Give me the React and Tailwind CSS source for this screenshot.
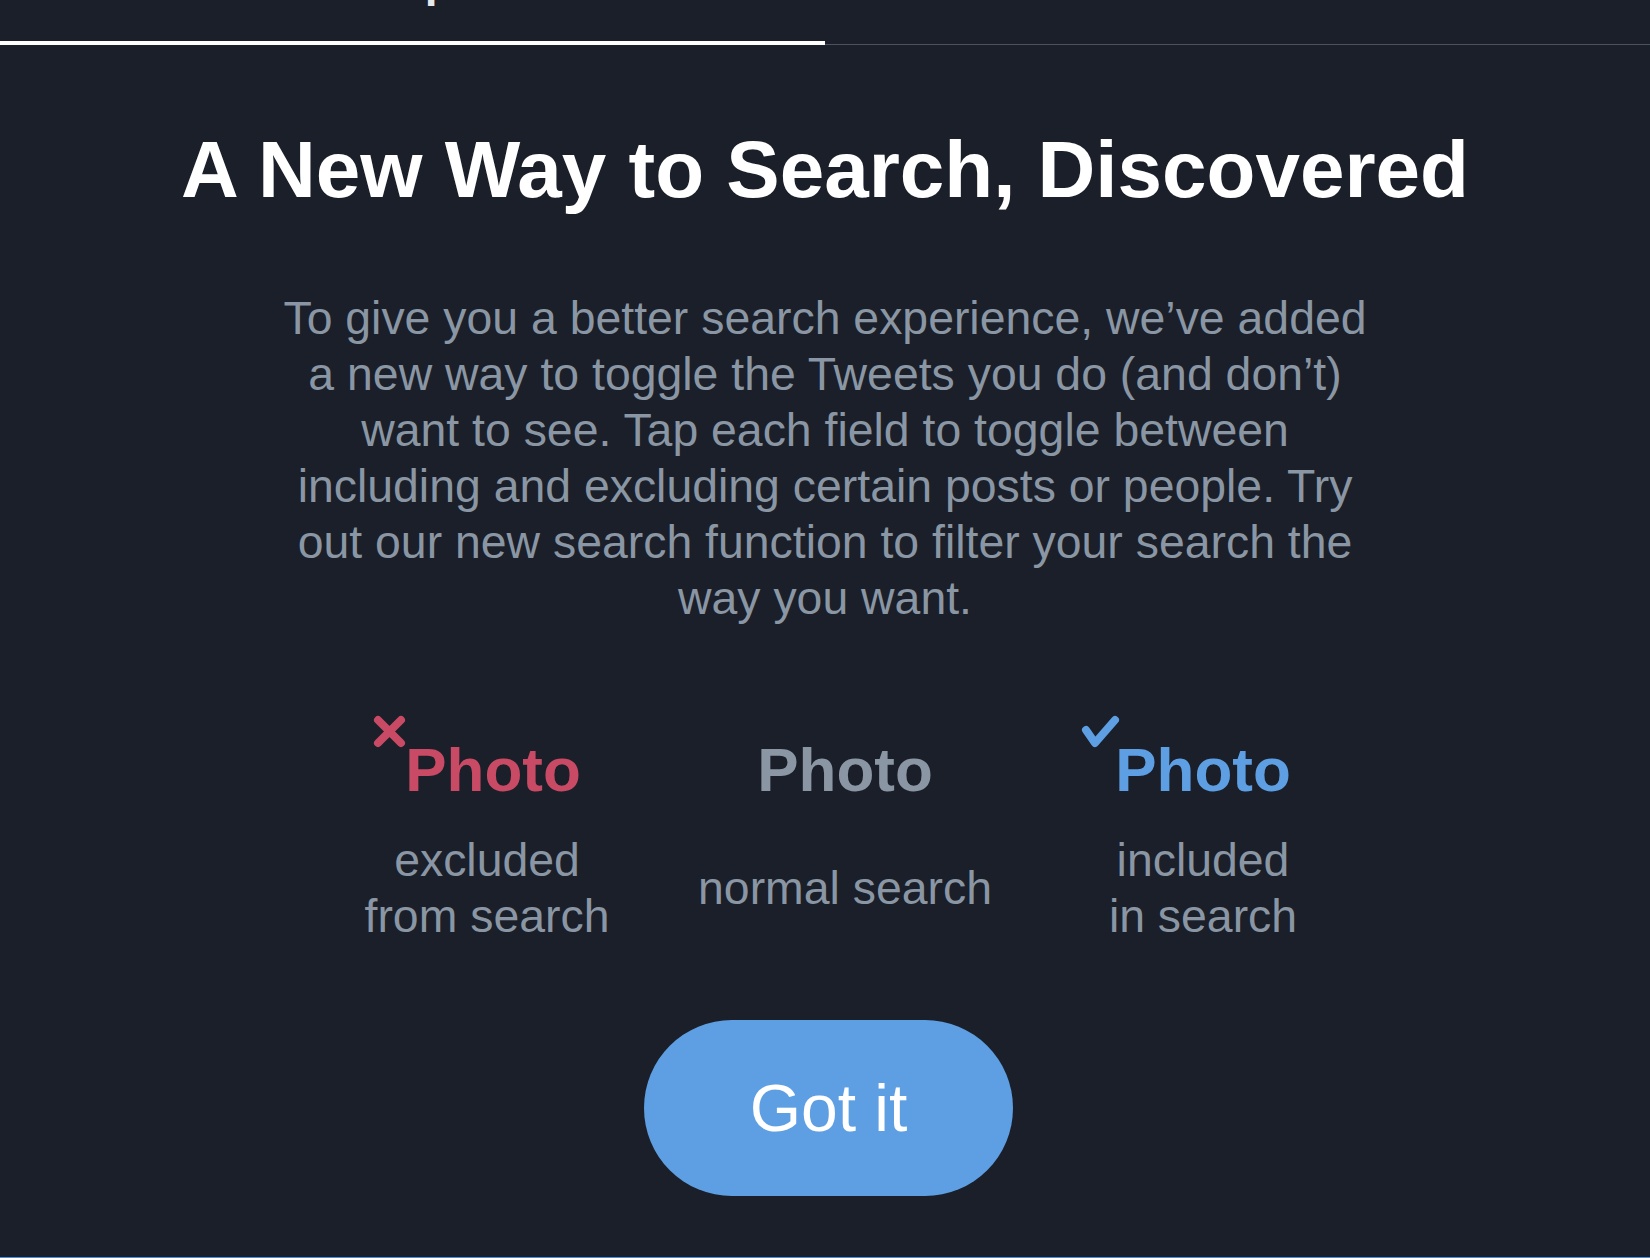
import React from "react";

const lines = [
  "To give you a better search experience, we’ve added",
  "a new way to toggle the Tweets you do (and don’t)",
  "want to see. Tap each field to toggle between",
  "including and excluding certain posts or people. Try",
  "out our new search function to filter your search the",
  "way you want.",
];

const XMark = () => (
  <svg className="absolute -left-[36px] -top-[24px] overflow-visible" width="44" height="34" viewBox="0 0 44 34" fill="none">
    <path d="M9 5 L32 28 M32 5 L9 28" stroke="#c84a64" strokeWidth="8" strokeLinecap="round" />
  </svg>
);

const Check = () => (
  <svg className="absolute -left-[36px] -top-[24px] overflow-visible" width="44" height="34" viewBox="0 0 44 34" fill="none">
    <path d="M7 15 L16 28 L36 5" stroke="#5e9fe3" strokeWidth="8" strokeLinecap="round" strokeLinejoin="round" />
  </svg>
);

const options = [
  { key: "ex", color: "text-[#c84a64] ml-[12px]", mark: <XMark />, sub: ["excluded", "from search"] },
  { key: "no", color: "text-[#8a96a3]", mark: null, sub: ["normal search"] },
  { key: "in", color: "text-[#5e9fe3]", mark: <Check />, sub: ["included", "in search"] },
];

export default function App() {
  return (
    <div className="h-[1258px] w-full overflow-hidden bg-[#1a1f29] flex flex-col font-['Liberation_Sans',Arial,sans-serif]">
      {/* tabs, scrolled mostly out of view */}
      <div className="flex items-end -mt-[43px] shrink-0">
        <div className="flex-1 h-[88px] border-b-4 border-white flex justify-center">
          <span className="text-[46px] leading-[46px] font-bold text-[#e6e8eb]">Top</span>
        </div>
        <div className="flex-1 h-[88px] border-b border-[#4b525d]" />
      </div>

      <h1 className="mt-[85px] text-center text-white font-bold text-[80px] leading-none">
        A New Way to Search, Discovered
      </h1>

      <p className="mt-[80px] text-center text-[#8a96a3] text-[46.4px] leading-[56px]">
        {lines.map((l) => (
          <span key={l} className="block whitespace-nowrap">{l}</span>
        ))}
      </p>

      <div className="mt-[113px] flex justify-center pl-[40px]">
        {options.map((o) => (
          <div key={o.key} className="w-[358px] flex flex-col items-center">
            <span className={`relative font-bold text-[62px] leading-none ${o.color}`}>
              {o.mark}
              Photo
            </span>
            <div className="mt-[31px] h-[112px] flex flex-col items-center justify-center text-[#8a96a3] text-[46.4px] leading-[56px]">
              {o.sub.map((s) => (
                <span key={s} className="whitespace-nowrap">{s}</span>
              ))}
            </div>
          </div>
        ))}
      </div>

      <div className="mt-[76px] flex justify-center pl-[7px]">
        <button className="w-[369px] h-[176px] rounded-full bg-[#5e9fe3] text-white text-[66px] leading-none">
          Got it
        </button>
      </div>

      <div className="mt-auto border-b border-[#4d8fd4]" />
    </div>
  );
}
